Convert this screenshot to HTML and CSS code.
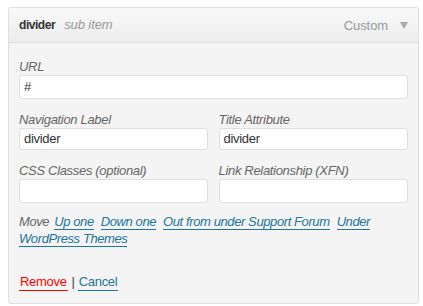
FILE: index.html
```html
<!DOCTYPE html>
<html>
<head>
<meta charset="utf-8">
<link rel="stylesheet" href="styles.css">
</head>
<body>
<div class="item">
  <div class="item-bar">
    <span class="item-title"><b>divider</b><i class="sub">sub item</i></span>
    <span class="item-controls"><span class="item-type">Custom</span><span class="arrow"></span></span>
  </div>
  <div class="settings">
    <div class="field">
      <label class="lbl">URL</label>
      <div class="input url">#</div>
    </div>
    <div class="row">
      <div class="field">
        <label class="lbl">Navigation Label</label>
        <div class="input short">divider</div>
      </div>
      <div class="field">
        <label class="lbl">Title Attribute</label>
        <div class="input short">divider</div>
      </div>
    </div>
    <div class="row last">
      <div class="field">
        <label class="lbl">CSS Classes (optional)</label>
        <div class="input"></div>
      </div>
      <div class="field">
        <label class="lbl">Link Relationship (XFN)</label>
        <div class="input"></div>
      </div>
    </div>
    <p class="move"><span class="move-lbl">Move</span><a class="first">Up one</a><a>Down one</a><a>Out from under Support Forum</a><a>Under</a> <a class="cont">WordPress Themes</a></p>
    <div class="actions"><a class="remove">Remove</a><span class="sep">|</span><a class="cancel">Cancel</a></div>
  </div>
</div>
</body>
</html>
```

FILE: styles.css
```css
html, body {
  margin: 0;
  padding: 0;
  background: #ffffff;
}
body {
  font-family: "Liberation Sans", Arial, sans-serif;
  font-size: 13px;
  color: #333;
  letter-spacing: -0.3px;
}
.item {
  margin: 7px 0 0 8px;
  width: 409px;
  height: 295px;
  border: 1px solid #dfdfdf;
  border-radius: 3px;
  background: #f4f4f4;
  overflow: hidden;
}
.item-bar {
  height: 34px;
  border-bottom: 1px solid #dfdfdf;
  background: linear-gradient(to bottom, #f9f9f9, #ececec);
  display: flex;
  align-items: center;
  justify-content: space-between;
  padding: 0 10px;
  line-height: 17px;
}
.item-title b {
  color: #333;
  font-weight: bold;
  font-size: 12px;
  letter-spacing: -0.45px;
}
.sub {
  color: #999;
  margin-left: 9px;
  letter-spacing: -0.1px;
}
.item-controls {
  display: flex;
  align-items: center;
  color: #999;
  letter-spacing: -0.1px;
}
.item-type {
  margin-right: 12px;
}
.arrow {
  width: 0;
  height: 0;
  border-left: 4px solid transparent;
  border-right: 4px solid transparent;
  border-top: 7px solid #aaa;
}
.settings {
  padding: 15px 10px 10px 10px;
}
.lbl {
  display: block;
  font-style: italic;
  color: #666;
  line-height: 17px;
  letter-spacing: -0.32px;
}
.input {
  box-sizing: border-box;
  height: 24px;
  border: 1px solid #dfdfdf;
  border-radius: 3px;
  background: #fff;
  padding: 0 5px 0 4px;
  line-height: 22px;
  color: #333;
  font-size: 13px;
}
.input.url {
  margin-bottom: 12px;
}
.input.short {
  height: 22px;
  line-height: 20px;
}
.row {
  display: flex;
  gap: 11px;
  margin-bottom: 12px;
}
.row.last {
  margin-bottom: 10px;
}
.row .field {
  width: 190px;
}
.row .field:first-child {
  width: 189px;
}
.move {
  margin: 0;
  font-style: italic;
  color: #666;
  line-height: 17px;
  letter-spacing: -0.4px;
}
.move a {
  color: #21759b;
  text-decoration: none;
  border-bottom: 1px solid #21759b;
  margin-left: 7px;
}
.move a.first {
  margin-left: 5px;
}
.move a.cont {
  margin-left: 0;
}
.actions {
  margin-top: 26px;
  line-height: 17px;
}
.actions a {
  text-decoration: none;
  padding: 0 1px 1px 1px;
}
.remove {
  color: #f00;
  border-bottom: 1px solid #f00;
}
.cancel {
  color: #21759b;
  border-bottom: 1px solid #21759b;
}
.sep {
  color: #444;
  margin: 0 3px 0 4px;
}
```
